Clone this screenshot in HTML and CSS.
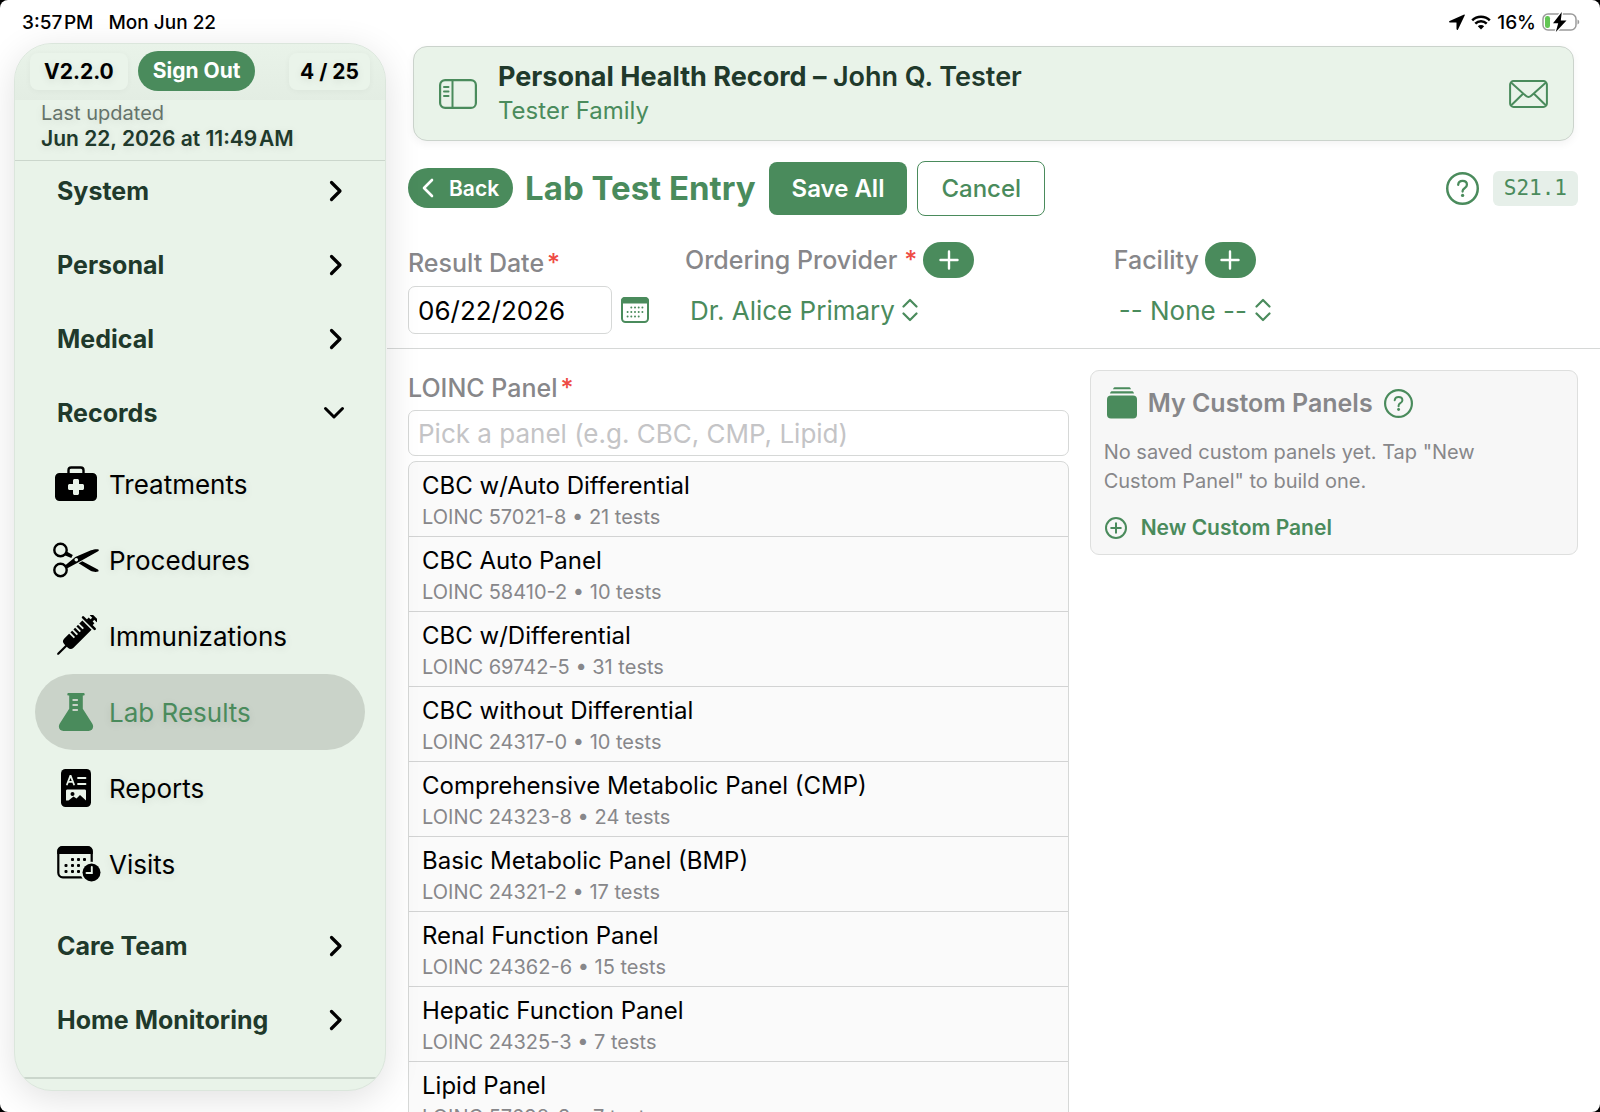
FILE: index.html
```html
<!DOCTYPE html>
<html lang="en">
<head>
<meta charset="utf-8">
<meta name="viewport" content="width=device-width, initial-scale=1">
<title>Personal Health Record – Lab Test Entry</title>
<link rel="stylesheet" href="styles.css">
</head>
<body>
<svg class="defs" aria-hidden="true">
  <symbol id="chevron-right" viewBox="0 0 14 22"><path d="M2.500 2.500l8.500 8.500-8.500 8.500" fill="none" stroke="currentColor" stroke-width="3.200" stroke-linecap="round" stroke-linejoin="round"/></symbol>
  <symbol id="chevron-down" viewBox="0 0 22 14"><path d="M2.500 2.500l8.500 8.500 8.500-8.500" fill="none" stroke="currentColor" stroke-width="3" stroke-linecap="round" stroke-linejoin="round"/></symbol>
  <symbol id="plus" viewBox="0 0 20 20"><path d="M10 1.500v17M1.500 10h17" fill="none" stroke="currentColor" stroke-width="2.400" stroke-linecap="round"/></symbol>
  <symbol id="updown" viewBox="0 0 16 24"><path d="M1.500 8.500L8 2l6.500 6.500M1.500 15.500L8 22l6.500-6.500" fill="none" stroke="currentColor" stroke-width="2.200" stroke-linecap="round" stroke-linejoin="round"/></symbol>
  <symbol id="help" viewBox="0 0 32 32"><circle cx="16" cy="16" r="14.800" fill="none" stroke="currentColor" stroke-width="2.400"/><path d="M11.800 12.400c.2-2.300 1.900-3.700 4.300-3.700 2.500 0 4.200 1.500 4.200 3.600 0 1.600-.8 2.500-2.300 3.400-1.500.9-1.900 1.500-1.900 2.700v.6" fill="none" stroke="currentColor" stroke-width="2.200" stroke-linecap="round"/><circle cx="16.100" cy="22.700" r="1.600" fill="currentColor"/></symbol>
</svg>
<div class="app">
  <div class="status">
    <div class="status-side"><span>3:57&#8202;PM</span><span>Mon Jun 22</span></div>
    <div class="status-side status-icons">
      <svg width="16" height="16" viewBox="0 0 16 16"><path d="M15.200.5L.6 7.100c-.8.4-.6 1.400.2 1.400h6.300c.2 0 .4.1.4.4v6.200c0 .9 1.100 1.100 1.500.3L15.800 1.200c.2-.5-.2-.9-.6-.7z"/></svg>
      <svg width="20" height="15" viewBox="0 0 20 15"><path d="M1.200 5.400a12.500 12.500 0 0 1 17.600 0M4.300 8.700a8 8 0 0 1 11.400 0" fill="none" stroke="#000" stroke-width="2.500"/><path d="M10 14.600l3.200-3.300a4.600 4.600 0 0 0-6.400 0z"/></svg>
      <span>16%</span>
      <svg width="38" height="20" viewBox="0 0 38 20"><rect x="1" y="2" width="33" height="16" rx="5" fill="none" stroke="#9b9b9b" stroke-width="1.500"/><path d="M35.500 7.500c2.300.8 2.300 4.200 0 5z" fill="#9b9b9b"/><rect x="3" y="4" width="5" height="12" rx="2.300" fill="#62c554"/><path d="M19.800 0L11 11.200h5.200L13.800 20 24.500 8.400h-5.700z" stroke="#fff" stroke-width="2.600" paint-order="stroke"/></svg>
    </div>
  </div>

  <div class="body">
    <aside class="sidebar">
      <div class="side-top">
        <span class="chip">V2.2.0</span>
        <button class="signout" type="button">Sign Out</button>
        <span class="chip count">4 / 25</span>
      </div>
      <div class="updated">
        <div class="updated-label">Last updated</div>
        <div class="updated-date">Jun 22, 2026 at 11:49&#8202;AM</div>
      </div>
      <nav class="nav">
        <button class="group" type="button">System<svg width="14" height="22"><use href="#chevron-right"/></svg></button>
        <button class="group" type="button">Personal<svg width="14" height="22"><use href="#chevron-right"/></svg></button>
        <button class="group" type="button">Medical<svg width="14" height="22"><use href="#chevron-right"/></svg></button>
        <button class="group open" type="button">Records<svg width="22" height="14"><use href="#chevron-down"/></svg></button>
        <div class="items">
          <a class="item" href="#treatments"><span class="icon"><svg width="42" height="36" viewBox="0 0 42 36"><path d="M13.500 8V4.200C13.500 2.500 14.500 1.500 16.200 1.500h9.600c1.700 0 2.700 1 2.700 2.700V8" fill="none" stroke="currentColor" stroke-width="2.400"/><path fill-rule="evenodd" fill="currentColor" d="M4.500 7h33A4.500 4.500 0 0 1 42 11.500v19a4.500 4.500 0 0 1-4.500 4.500h-33A4.500 4.500 0 0 1 0 30.500v-19A4.500 4.500 0 0 1 4.500 7zM19.800 13c-1.200 0-1.800.6-1.800 1.800V18h-3.200c-1.200 0-1.800.6-1.800 1.800v2.400c0 1.200.6 1.800 1.800 1.800H18v3.200c0 1.200.6 1.800 1.800 1.800h2.400c1.200 0 1.800-.6 1.800-1.800V24h3.200c1.200 0 1.800-.6 1.800-1.800v-2.400c0-1.200-.6-1.800-1.800-1.800H24v-3.200c0-1.200-.6-1.800-1.800-1.800z"/></svg></span>Treatments</a>
          <a class="item" href="#procedures"><span class="icon"><svg width="46" height="36" viewBox="0 0 46 36"><g fill="none" stroke="currentColor" stroke-width="2.400"><circle cx="7.500" cy="8" r="6.200"/><circle cx="7.500" cy="28" r="6.200"/></g><path fill="currentColor" d="M13.600 9.500l6.200 3.600-1.500 3-6.600-2.900zM12.300 23.200l10-8.300L38 8.300c3-1.200 6-1.500 7.500-.8.600.4.400 1.300-.4 1.800L25.500 20.200l-11.600 6.300zM25.600 21.300l3.700-2 15.600 8.300c.8.500.9 1.400.3 1.800-2.300 1-5.500.3-7.600-.6z"/><circle cx="23.300" cy="17.800" r="1.800" fill="#e9f3e9"/></svg></span>Procedures</a>
          <a class="item" href="#immunizations"><span class="icon"><svg width="42" height="42" viewBox="0 0 42 42"><g transform="rotate(45 21 21)" fill="currentColor"><rect x="15.500" y="-6" width="11" height="2.600" rx="1.300"/><rect x="19.500" y="-5" width="3" height="8"/><rect x="11.500" y="1.500" width="19" height="2.600" rx="1.300"/><path d="M14.500 5.500h13v25.500a4 4 0 0 1-4 4h-5a4 4 0 0 1-4-4z"/><rect x="17" y="-1" width="8" height="3"/><path d="M19.900 34h2.200v12.500l-1.100 1-1.100-1z"/><g fill="#e9f3e9"><rect x="14" y="9.800" width="7" height="1.800"/><rect x="14" y="14" width="7" height="1.800"/><rect x="14" y="18.200" width="7" height="1.800"/><rect x="14" y="22.400" width="7" height="1.800"/></g></g></svg></span>Immunizations</a>
          <a class="item active" href="#lab-results" aria-current="page"><span class="icon"><svg width="36" height="38" viewBox="0 0 36 38"><path fill="currentColor" d="M10.500 0h15c1.600 0 1.600 2.600 0 2.600h-.7v13.200l9.400 14.700c2.200 3.500.3 7.500-3.700 7.500h-25C1.500 38-.4 34 1.800 30.500l9.400-14.700V2.600h-.7c-1.600 0-1.600-2.600 0-2.600z"/><path d="M15.200 7h4M15.200 12h4M15.200 17h4" stroke="#cad3c9" stroke-width="1.800" stroke-linecap="round"/></svg></span>Lab Results</a>
          <a class="item" href="#reports"><span class="icon"><svg width="30" height="38" viewBox="0 0 30 38"><rect width="30" height="38" rx="4.500" fill="currentColor"/><g fill="none" stroke="#e9f3e9" stroke-width="1.800" stroke-linecap="round"><path d="M6 15.500L9.300 7h.4L13 15.500M7.200 12.800h4.600M17 9h7.500M17 15h7.500"/></g><path fill="#e9f3e9" d="M6.500 20.500h17c1 0 1.500.5 1.500 1.500v9.500l-6-5.500-3.500 3.500-3-2-5 4H5v-9.500c0-1 .5-1.500 1.500-1.500z"/><circle cx="11.500" cy="25" r="2" fill="currentColor"/></svg></span>Reports</a>
          <a class="item" href="#visits"><span class="icon"><svg width="50" height="38" viewBox="-6 0 50 38"><rect x="1.300" y="2.300" width="33.400" height="30" rx="4.500" fill="none" stroke="currentColor" stroke-width="2.200"/><path d="M.2 9V6A5 5 0 0 1 5.200 1h25.600a5 5 0 0 1 5 5v3z" fill="currentColor"/><g fill="currentColor"><rect x="14" y="13" width="3" height="3" rx="1"/><rect x="20" y="13" width="3" height="3" rx="1"/><rect x="26" y="13" width="3" height="3" rx="1"/><rect x="7.500" y="19" width="3" height="3" rx="1"/><rect x="14" y="19" width="3" height="3" rx="1"/><rect x="20" y="19" width="3" height="3" rx="1"/><rect x="7.500" y="25" width="3" height="3" rx="1"/><rect x="14" y="25" width="3" height="3" rx="1"/><rect x="20" y="25" width="3" height="3" rx="1"/></g><circle cx="34.500" cy="27.500" r="10.800" fill="#e9f3e9"/><circle cx="34.500" cy="27.500" r="9" fill="currentColor"/><path d="M34.800 22V28H29.500" fill="none" stroke="#e9f3e9" stroke-width="1.900" stroke-linecap="round"/></svg></span>Visits</a>
        </div>
        <button class="group" type="button">Care Team<svg width="14" height="22"><use href="#chevron-right"/></svg></button>
        <button class="group" type="button">Home Monitoring<svg width="14" height="22"><use href="#chevron-right"/></svg></button>
      </nav>
      <div class="side-foot"></div>
    </aside>

    <main class="main">
      <header class="record">
        <button class="plain" type="button" aria-label="Toggle sidebar"><svg width="38" height="30" viewBox="0 0 38 30"><rect x="1.100" y="1.100" width="35.800" height="27.800" rx="5" fill="none" stroke="currentColor" stroke-width="2.200"/><path d="M13.500 1v28M5 8h4.500M5 12.500h4.500M5 17h4.500" stroke="currentColor" stroke-width="2" stroke-linecap="round"/></svg></button>
        <div class="record-text">
          <h1 class="record-title">Personal Health Record – <span>John Q. Tester</span></h1>
          <div class="record-sub">Tester Family</div>
        </div>
        <button class="plain" type="button" aria-label="Messages"><svg width="39" height="28" viewBox="0 0 39 28"><g fill="none" stroke="currentColor" stroke-width="2"><rect x="1.100" y="1.100" width="36.800" height="25.800" rx="3.500"/><path d="M2 2.500l14.800 13.300c1.700 1.500 3.700 1.500 5.400 0L37 2.500M2 25.500L14.300 13.500M37 25.500L24.700 13.500"/></g></svg></button>
      </header>

      <div class="toolbar">
        <button class="back" type="button"><svg width="12" height="20" viewBox="0 0 12 20"><path d="M10 2l-8 8 8 8" fill="none" stroke="currentColor" stroke-width="2.600" stroke-linecap="round" stroke-linejoin="round"/></svg>Back</button>
        <h2 class="title">Lab Test Entry</h2>
        <button class="save" type="button">Save All</button>
        <button class="cancel" type="button">Cancel</button>
        <button class="plain help" type="button" aria-label="Help"><svg width="33" height="33"><use href="#help"/></svg></button>
        <span class="code">S21.1</span>
      </div>

      <form class="fields">
        <div class="field date-field">
          <label class="label" for="date">Result Date<span class="req">*</span></label>
          <div class="date-row">
            <input class="input date" id="date" type="text" value="06/22/2026">
            <button class="plain" type="button" aria-label="Open calendar"><svg width="28" height="26" viewBox="0 0 28 26"><rect x="1" y="1" width="26" height="24" rx="3.500" fill="none" stroke="currentColor" stroke-width="2"/><path d="M0 6.500V4a4 4 0 0 1 4-4h20a4 4 0 0 1 4 4v2.500z" fill="currentColor"/><g stroke="currentColor" stroke-width="2" stroke-linecap="round" stroke-dasharray="0 3.700"><path d="M10.300 10.500h11.300M6.600 15h15M6.600 19.500h11.200"/></g></svg></button>
          </div>
        </div>
        <div class="field">
          <div class="label-row"><label class="label" for="provider">Ordering Provider<span class="req wide">*</span></label><button class="add" type="button" aria-label="Add provider"><svg width="20" height="20"><use href="#plus"/></svg></button></div>
          <div class="pick"><select class="select" id="provider"><option>Dr. Alice Primary</option></select><svg width="16" height="24"><use href="#updown"/></svg></div>
        </div>
        <div class="field">
          <div class="label-row"><label class="label" for="facility">Facility</label><button class="add" type="button" aria-label="Add facility"><svg width="20" height="20"><use href="#plus"/></svg></button></div>
          <div class="pick"><select class="select" id="facility"><option>-- None --</option></select><svg width="16" height="24"><use href="#updown"/></svg></div>
        </div>
      </form>

      <div class="columns">
        <section class="panel-picker">
          <label class="label" for="panel">LOINC Panel<span class="req">*</span></label>
          <input class="input panel-input" id="panel" type="text" placeholder="Pick a panel (e.g. CBC, CMP, Lipid)">
          <ul class="list">
            <li><button class="row" type="button"><span class="name">CBC w/Auto Differential</span><span class="meta">LOINC 57021-8 • 21 tests</span></button></li>
            <li><button class="row" type="button"><span class="name">CBC Auto Panel</span><span class="meta">LOINC 58410-2 • 10 tests</span></button></li>
            <li><button class="row" type="button"><span class="name">CBC w/Differential</span><span class="meta">LOINC 69742-5 • 31 tests</span></button></li>
            <li><button class="row" type="button"><span class="name">CBC without Differential</span><span class="meta">LOINC 24317-0 • 10 tests</span></button></li>
            <li><button class="row" type="button"><span class="name">Comprehensive Metabolic Panel (CMP)</span><span class="meta">LOINC 24323-8 • 24 tests</span></button></li>
            <li><button class="row" type="button"><span class="name">Basic Metabolic Panel (BMP)</span><span class="meta">LOINC 24321-2 • 17 tests</span></button></li>
            <li><button class="row" type="button"><span class="name">Renal Function Panel</span><span class="meta">LOINC 24362-6 • 15 tests</span></button></li>
            <li><button class="row" type="button"><span class="name">Hepatic Function Panel</span><span class="meta">LOINC 24325-3 • 7 tests</span></button></li>
            <li><button class="row" type="button"><span class="name">Lipid Panel</span><span class="meta">LOINC 57698-3 • 7 tests</span></button></li>
          </ul>
        </section>
        <section class="custom">
          <div class="custom-head">
            <svg width="30" height="32" viewBox="0 0 30 32"><g fill="currentColor"><rect y="8.500" width="30" height="23" rx="4"/><path d="M3 6.500c.3-1.600 1-2.200 2.600-2.200h18.800c1.600 0 2.300.6 2.600 2.200zM6 2.300C6.300.8 7 .2 8.400.2h13.200c1.400 0 2.100.6 2.400 2.100z"/></g></svg>
            <h3 class="custom-title">My Custom Panels</h3>
            <button class="plain" type="button" aria-label="About custom panels"><svg width="29" height="29"><use href="#help"/></svg></button>
          </div>
          <p class="custom-text">No saved custom panels yet. Tap "New Custom Panel" to build one.</p>
          <button class="new" type="button"><svg width="22" height="22" viewBox="0 0 22 22"><circle cx="11" cy="11" r="10" fill="none" stroke="currentColor" stroke-width="2"/><path d="M11 6.200v9.600M6.200 11h9.600" stroke="currentColor" stroke-width="2" stroke-linecap="round"/></svg>New Custom Panel</button>
        </section>
      </div>
    </main>
  </div>
</div>
</body>
</html>
```
FILE: styles.css
```css
:root {
  --green: #4a8b5c;
  --mint: #e9f3e9;
  --ink: #20392b;
  --gray: #87878a;
  --line: #d6d8d7;
}

* { box-sizing: border-box; }

html { background: #000; }

body {
  margin: 0;
  font-family: Inter, "Liberation Sans", sans-serif;
  color: #000;
}

h1, h2, h3, p, ul { margin: 0; padding: 0; }

button {
  font: inherit;
  color: inherit;
  border: 0;
  margin: 0;
  padding: 0;
  background: none;
  cursor: pointer;
}

svg { display: block; flex: none; }

.defs { position: absolute; width: 0; height: 0; }

.app {
  display: flex;
  flex-direction: column;
  height: 100vh;
  overflow: hidden;
  background: #fff;
  border-radius: 8px;
}

/* status bar */
.status {
  display: flex;
  justify-content: space-between;
  align-items: center;
  height: 43px;
  flex: none;
  padding: 1px 20px 0 22px;
  font-size: 19px;
  font-weight: 500;
}

.status-side { display: flex; gap: 15px; }

.status-icons { align-items: center; gap: 6px; }

.body {
  display: grid;
  grid-template-columns: 387px minmax(0, 1fr);
  flex: 1;
  min-height: 0;
}

/* sidebar */
.sidebar {
  z-index: 1;
  display: flex;
  flex-direction: column;
  margin: 0 1px 21px 14px;
  overflow: hidden;
  background: var(--mint);
  border: 1px solid #dbe6dc;
  border-radius: 38px;
  box-shadow: 0 8px 36px rgba(0, 0, 0, 0.12);
  text-shadow: 0 2px 8px rgba(0, 0, 0, 0.1);
}

.side-top {
  display: flex;
  align-items: center;
  height: 56px;
  flex: none;
  padding: 0 15px 2px;
  background: linear-gradient(#e9f3e9, #e3ede3);
  font-size: 21px;
  font-weight: 700;
}

.chip {
  padding: 0 14px;
  line-height: 37px;
  border-radius: 8px;
  background: #eaf4ea;
  box-shadow: 0 1px 6px rgba(0, 0, 0, 0.04);
}

.count { margin-left: auto; padding: 0 11px; }

.signout {
  margin-left: 10px;
  padding: 0 15px;
  line-height: 40px;
  border-radius: 20px;
  background: var(--green);
  color: #fff;
}

.updated {
  flex: none;
  height: 61px;
  padding: 0 26px;
  border-bottom: 1px solid #cbd6cc;
}

.updated-label { font-size: 20px; line-height: 26px; color: #65736a; }

.updated-date { font-size: 21px; line-height: 26px; font-weight: 600; color: var(--ink); }

.nav {
  flex: 1;
  min-height: 0;
  padding: 0 20px;
  overflow: auto;
  scrollbar-width: none;
}

.group {
  display: flex;
  justify-content: space-between;
  align-items: center;
  width: 100%;
  height: 60px;
  padding: 0 22px;
  font-size: 25px;
  font-weight: 700;
  color: var(--ink);
}

.group + .group, .items + .group { margin-top: 14px; }

.group.open { padding-right: 20px; }

.group svg { color: #000; }

.items { padding-top: 3px; }

.item {
  display: flex;
  align-items: center;
  gap: 11px;
  height: 76px;
  padding-left: 18px;
  border-radius: 38px;
  font-size: 26px;
  color: #000;
  text-decoration: none;
}

.item.active { background: #cad3c9; color: var(--green); }

.icon { display: flex; justify-content: center; width: 45px; }

.side-foot { height: 13px; flex: none; border-top: 2px solid #cbd6cc; }

/* main column */
.main {
  display: flex;
  flex-direction: column;
  min-width: 0;
  min-height: 0;
}

.plain { color: var(--green); }

.record {
  display: flex;
  align-items: center;
  flex: none;
  height: 95px;
  margin: 3px 26px 0;
  padding: 0 25px;
  gap: 21px;
  background: var(--mint);
  border: 1px solid #cbd3cc;
  border-radius: 14px;
  box-shadow: 0 3px 8px rgba(0, 0, 0, 0.05);
}

.record-text { flex: 1; padding-top: 1px; }

.record-title { font-size: 27px; line-height: 34px; font-weight: 700; color: var(--ink); }

.record-title span { font-weight: 600; }

.record-sub { font-size: 24px; line-height: 34px; color: var(--green); }

.toolbar {
  display: flex;
  align-items: center;
  flex: none;
  height: 56px;
  margin: 19px 22px 0 21px;
}

.back {
  display: flex;
  align-items: center;
  gap: 15px;
  height: 40px;
  padding: 0 14px;
  border-radius: 20px;
  background: var(--green);
  color: #fff;
  font-size: 21px;
  font-weight: 600;
}

.title { margin: 0 13px 0 12px; font-size: 33px; font-weight: 700; color: var(--green); }

.save, .cancel {
  height: 53px;
  padding: 0 23px;
  border-radius: 8px;
  font-size: 24px;
}

.save { background: var(--green); color: #fff; font-weight: 600; }

.cancel {
  height: 55px;
  margin-left: 10px;
  border: 1px solid var(--green);
  color: var(--green);
  font-weight: 500;
}

.help { margin-left: auto; }

.code {
  margin-left: 14px;
  padding: 0 11px;
  border-radius: 6px;
  background: #e6efe9;
  color: var(--green);
  font: 400 21px/35px "DejaVu Sans Mono", monospace;
}

.fields {
  display: grid;
  grid-template-columns: 241px 11fr 13fr;
  column-gap: 36px;
  flex: none;
  padding: 25px 22px 14px 21px;
  border-bottom: 1px solid var(--line);
}

.field { display: flex; flex-direction: column; }

.label { font-size: 25px; line-height: 30px; font-weight: 500; color: var(--gray); }

.req { margin-left: 3px; color: #ee4b44; }

.req.wide { margin-left: 7px; }

.label-row { display: flex; align-items: center; gap: 6px; height: 37px; }

.date-field { padding-top: 7px; gap: 8px; }

.date-row { display: flex; align-items: center; gap: 9px; }

.input {
  width: 100%;
  padding: 0 9px;
  border: 1px solid var(--line);
  border-radius: 7px;
  background: #fff;
  font: 400 26px Inter, "Liberation Sans", sans-serif;
  color: #000;
}

.input::placeholder { color: #c4c4c6; opacity: 1; }

.date { width: 204px; height: 48px; }

.add {
  display: flex;
  align-items: center;
  justify-content: center;
  width: 51px;
  height: 36px;
  border-radius: 18px;
  background: var(--green);
  color: #fff;
}

.pick {
  display: flex;
  align-items: center;
  gap: 7px;
  margin-top: 14px;
  padding-left: 5px;
  height: 36px;
  color: var(--green);
}

.select {
  appearance: none;
  border: 0;
  padding: 0;
  background: none;
  color: inherit;
  font: 400 26px Inter, "Liberation Sans", sans-serif;
}

.columns {
  display: grid;
  grid-template-columns: 23fr 17fr;
  align-items: start;
  gap: 21px;
  flex: 1;
  min-height: 0;
  padding: 21px 22px 0 21px;
  overflow: auto;
  scrollbar-width: none;
}

.panel-picker { display: flex; flex-direction: column; padding-top: 3px; }

.panel-input { height: 46px; margin-top: 7px; }

.list {
  margin-top: 5px;
  list-style: none;
  overflow: hidden;
  border: 1px solid var(--line);
  border-radius: 8px;
  background: #fafafa;
}

.list li { border-bottom: 1px solid #d2d3d3; }

.row {
  display: flex;
  flex-direction: column;
  width: 100%;
  height: 74px;
  padding: 8px 13px 0;
  text-align: left;
}

.name { font-size: 24px; line-height: 32px; }

.meta { font-size: 20px; line-height: 30px; color: var(--gray); }

.custom {
  padding: 15px 13px 12px;
  border: 1px solid #dedfde;
  border-radius: 9px;
  background: #f7f7f7;
}

.custom-head { display: flex; align-items: center; gap: 11px; padding-left: 3px; color: var(--green); }

.custom-title { font-size: 25px; line-height: 34px; font-weight: 600; color: var(--gray); }

.custom-text { max-width: 400px; margin-top: 18px; font-size: 20px; line-height: 29px; color: var(--gray); }

.new {
  display: flex;
  align-items: center;
  gap: 14px;
  margin-top: 18px;
  padding-left: 1px;
  font-size: 21px;
  line-height: 28px;
  font-weight: 600;
  color: var(--green);
}
```
